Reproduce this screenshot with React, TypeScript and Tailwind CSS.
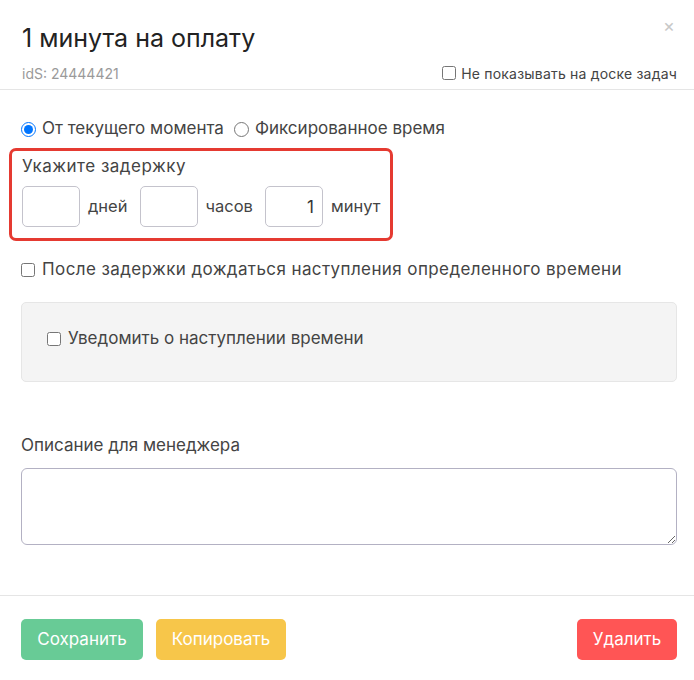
import { useState } from 'react';

const font = { fontFamily: 'Inter, "Noto Sans", sans-serif' };

const DelayInput = ({ value, unit }: { value: string; unit: string }) => (
  <div className="flex items-center">
    <input
      defaultValue={value}
      className="w-[58px] h-[41px] border border-[#c4c3cc] rounded-[5px] px-2 text-right text-[17px] text-[#333] outline-none"
    />
    <span className="ml-[8px] mr-[12px] text-[16.5px] text-[#444]">{unit}</span>
  </div>
);

const App = () => {
  const [mode, setMode] = useState('now');

  return (
    <div className="w-[694px] h-[680px] bg-white relative text-[#333]" style={font}>
      <button className="absolute top-[17px] right-[19px] text-[18px] leading-none text-[#c8c8c8]">×</button>

      <div className="pl-[22px] pr-[17px] pt-[22px] pb-[6px] border-b border-[#e5e5e5]">
        <h2 className="text-[25px] leading-[32px] text-[#222]">1 минута на оплату</h2>
        <div className="mt-[9px] flex items-center justify-between h-[20px]">
          <span className="text-[14px] text-[#9a9a9a]">idS: 24444421</span>
          <label className="flex items-center gap-[5px] text-[14px] tracking-[0.2px] text-[#444]">
            <input type="checkbox" className="w-[14px] h-[14px]" />
            Не показывать на доске задач
          </label>
        </div>
      </div>

      <div className="pl-[21px] pr-[17px] pt-[29px]">
        <div className="flex items-center h-[20px] text-[17px] text-[#444]">
          <label className="flex items-center gap-[6px]">
            <input type="radio" name="mode" checked={mode === 'now'} onChange={() => setMode('now')} className="w-[15px] h-[15px] m-0" />
            От текущего момента
          </label>
          <label className="flex items-center gap-[6px] ml-[10px]">
            <input type="radio" name="mode" checked={mode === 'fixed'} onChange={() => setMode('fixed')} className="w-[15px] h-[15px] m-0" />
            Фиксированное время
          </label>
        </div>

        <div className="mt-[9px] -ml-[12px] w-[384px] border-[3px] border-[#e53a31] rounded-[7px] pl-[10px] pt-[5px] pb-[11px]">
          <div className="h-[20px] leading-[20px] text-[17px] tracking-[0.5px] text-[#444]">Укажите задержку</div>
          <div className="mt-[10px] flex items-center">
            <DelayInput value="" unit="дней" />
            <DelayInput value="" unit="часов" />
            <DelayInput value="1" unit="минут" />
          </div>
        </div>

        <label className="mt-[19px] flex items-center gap-[7px] h-[20px] text-[17px] tracking-[0.4px] text-[#444]">
          <input type="checkbox" className="w-[14px] h-[14px] m-0" />
          После задержки дождаться наступления определенного времени
        </label>

        <div className="mt-[22px] h-[80px] bg-[#f4f4f4] border border-[#e6e6e6] rounded-[5px] pl-[25px] pt-[26px]">
          <label className="flex items-center gap-[7px] h-[20px] text-[17px] text-[#444]">
            <input type="checkbox" className="w-[14px] h-[14px] m-0" />
            Уведомить о наступлении времени
          </label>
        </div>

        <div className="mt-[53px] h-[20px] leading-[20px] text-[17px] text-[#444]">Описание для менеджера</div>
        <textarea className="mt-[13px] block w-full h-[77px] border border-[#b3b1c3] rounded-[6px] outline-none p-2 text-[16px]" />
      </div>

      <div className="mt-[50px] border-t border-[#e5e5e5] pl-[21px] pr-[17px] pt-[23px] flex items-center">
        <button className="h-[41px] w-[122px] rounded-[5px] bg-[#68cb96] text-white text-[17px]">Сохранить</button>
        <button className="ml-[13px] h-[41px] w-[130px] rounded-[5px] bg-[#f7c64a] text-white text-[17px]">Копировать</button>
        <button className="ml-auto h-[41px] w-[100px] rounded-[5px] bg-[#ff5555] text-white text-[17px]">Удалить</button>
      </div>
    </div>
  );
};

export default App;
